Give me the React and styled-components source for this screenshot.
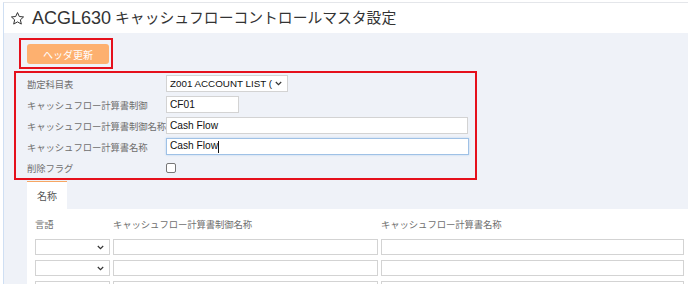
import styled, { createGlobalStyle } from "styled-components";

const GlobalStyle = createGlobalStyle`
  html, body {
    margin: 0;
    padding: 0;
    background: #ffffff;
    font-family: "Liberation Sans", "Noto Sans CJK JP", sans-serif;
    overflow: hidden;
  }
  * { box-sizing: border-box; }
`;

// frame
const Frame = styled.div`
  margin: 2px 0 0 3px;
  min-height: 282px;
  border-top: 1px solid #e4e6ea;
  border-left: 1px solid #cfdff3;
  background: #eff2f8;
  display: flex;
  flex-direction: column;
`;

const Header = styled.header`
  flex-shrink: 0;
  height: 30px;
  background: #ffffff;
  display: flex;
  align-items: center;
  padding-left: 6px;
  gap: 7px;
  color: #333;
`;

const Code = styled.span`
  font-size: 18px;
  line-height: 1;
`;

const Name = styled.span`
  font-size: 14.8px;
  line-height: 1;
  margin-left: -3px;
`;

const Body = styled.main`
  flex: 1;
  padding-left: 23px;
  display: flex;
  flex-direction: column;
  align-items: flex-start;
`;

// red annotation boxes
const Mark = styled.div`
  flex-shrink: 0;
  border: 2px solid #e5101c;
  margin-left: ${(p) => p.$left}px;
  margin-top: ${(p) => p.$top}px;
  padding: ${(p) => p.$pad};
  width: ${(p) => (p.$width ? `${p.$width}px` : "auto")};
`;

const Button = styled.button`
  width: 82px;
  height: 20px;
  border: none;
  border-radius: 3px;
  background: #fdb06f;
  color: #ffffff;
  font-family: inherit;
  font-size: 10px;
  padding: 0;
  display: block;
`;

const FormRow = styled.div`
  height: 21px;
  display: flex;
  align-items: center;
`;

const Label = styled.span`
  width: 139px;
  font-size: 9.4px;
  color: #6f6f6f;
  white-space: nowrap;
  letter-spacing: -0.1px;
`;

const Field = styled.div`
  flex-shrink: 0;
  width: ${(p) => p.$w}px;
  height: ${(p) => p.$h || 17}px;
  border: 1px solid ${(p) => (p.$focus ? "#9fc1e6" : "#d3d3d3")};
  box-shadow: ${(p) => (p.$focus ? "0 0 2px #b8d4f0" : "none")};
  background: #ffffff;
  display: flex;
  align-items: center;
  justify-content: space-between;
  padding: 0 5px 0 3px;
  font-size: ${(p) => p.$fs || 10.2}px;
  color: #111;
  white-space: nowrap;
  overflow: hidden;
`;

const Caret = styled.span`
  display: inline-block;
  width: 1px;
  height: 12px;
  background: #111;
  vertical-align: middle;
`;

const Check = styled.span`
  width: 10px;
  height: 10px;
  border: 1px solid #777;
  border-radius: 2px;
  background: #fff;
`;

const Tabs = styled.div`
  flex-shrink: 0;
  margin-top: 1px;
  display: flex;
`;

const Tab = styled.div`
  width: 40px;
  height: 28px;
  background: #ffffff;
  border-top: 1px solid #f7a663;
  font-size: 10px;
  color: #555;
  display: flex;
  align-items: center;
  padding-left: 10px;
`;

const Panel = styled.section`
  align-self: stretch;
  flex: 1;
  background: #ffffff;
  padding: 0 4px 0 8px;
`;

const Grid = styled.div`
  display: grid;
  grid-template-columns: 75px 265px 303px;
  column-gap: 3px;
  row-gap: ${(p) => p.$gap || 0}px;
  align-items: center;
`;

const Head = styled.div`
  height: 30px;
  display: flex;
  align-items: center;
  font-size: 9.4px;
  color: #6f6f6f;
  letter-spacing: -0.1px;
`;

const Chevron = () => (
  <svg width="7" height="5" viewBox="0 0 7 5">
    <path d="M0.8 1 L3.5 3.6 L6.2 1" fill="none" stroke="#333" strokeWidth="1.2" />
  </svg>
);

const Star = () => (
  <svg width="15" height="15" viewBox="0 0 24 24">
    <path
      d="M12 2.5l2.9 6.3 6.8.7-5.1 4.6 1.5 6.8L12 17.4l-6.1 3.5 1.5-6.8-5.1-4.6 6.8-.7z"
      fill="none"
      stroke="#333"
      strokeWidth="1.6"
      strokeLinejoin="round"
    />
  </svg>
);

const rows = [0, 1, 2];

function App() {
  return (
    <>
      <GlobalStyle />
      <Frame>
        <Header>
          <Star />
          <Code>ACGL630</Code>
          <Name>キャッシュフローコントロールマスタ設定</Name>
        </Header>
        <Body>
          <Mark $left={-8} $top={5} $pad="4px 2px 3px 6px">
            <Button>ヘッダ更新</Button>
          </Mark>
          <Mark $left={-13} $top={2} $pad="0 0 0 11px" $width={463}>
            <FormRow>
              <Label>勘定科目表</Label>
              <Field $w={122} $fs={9.8}>
                <span>Z001 ACCOUNT LIST (</span>
                <Chevron />
              </Field>
            </FormRow>
            <FormRow>
              <Label>キャッシュフロー計算書制御</Label>
              <Field $w={73}>CF01</Field>
            </FormRow>
            <FormRow>
              <Label>キャッシュフロー計算書制御名称</Label>
              <Field $w={302}>Cash Flow</Field>
            </FormRow>
            <FormRow>
              <Label>キャッシュフロー計算書名称</Label>
              <Field $w={303} $focus>
                <span>
                  Cash Flow
                  <Caret />
                </span>
              </Field>
            </FormRow>
            <FormRow>
              <Label>削除フラグ</Label>
              <Check />
            </FormRow>
          </Mark>
          <Tabs>
            <Tab>名称</Tab>
          </Tabs>
          <Panel>
            <Grid>
              <Head>言語</Head>
              <Head>キャッシュフロー計算書制御名称</Head>
              <Head>キャッシュフロー計算書名称</Head>
            </Grid>
            <Grid $gap={5}>
              {rows.map((r) => (
                <>
                  <Field key={`l${r}`} $w={75} $h={16}>
                    <span />
                    <Chevron />
                  </Field>
                  <Field key={`a${r}`} $w={265} $h={16} />
                  <Field key={`b${r}`} $w={303} $h={16} />
                </>
              ))}
            </Grid>
          </Panel>
        </Body>
      </Frame>
    </>
  );
}

export default App;
